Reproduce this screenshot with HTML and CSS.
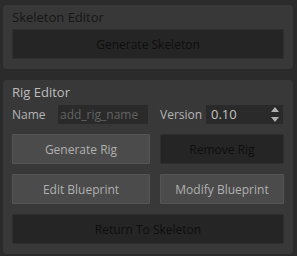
FILE: index.html
```html
<!DOCTYPE html>
<html lang="en">
<head>
    <meta charset="UTF-8">
    <title>Rig Tool</title>
    <link rel="stylesheet" href="styles.css">
</head>
<body>
    <div class="panel disabled">
        <div class="panel-title">Skeleton Editor</div>
        <button class="btn btn-off">Generate Skeleton</button>
    </div>

    <div class="panel">
        <div class="panel-title">Rig Editor</div>
        <div class="field-row">
            <label class="field-label" for="rigName">Name</label>
            <input id="rigName" class="text-input" placeholder="add_rig_name">
            <label class="field-label version-label" for="rigVersion">Version</label>
            <div class="spinbox">
                <span class="spin-value" id="rigVersion">0.10</span>
                <span class="spin-arrows">
                    <span class="arrow-up"></span>
                    <span class="arrow-down"></span>
                </span>
            </div>
        </div>
        <div class="btn-grid">
            <button class="btn">Generate Rig</button>
            <button class="btn btn-off">Remove Rig</button>
            <button class="btn">Edit Blueprint</button>
            <button class="btn">Modify Blueprint</button>
            <button class="btn btn-off wide">Return To Skeleton</button>
        </div>
    </div>
</body>
</html>
```

FILE: styles.css
```css
body {
    margin: 0;
    padding: 5px 4px 0 3px;
    background-color: #2b2b2b;
    font-family: 'Open Sans', 'Noto Sans', sans-serif;
    font-size: 12px;
    color: #b4b4b4;
}

.panel {
    background-color: #383838;
    border-radius: 4px;
    padding: 3px 9px 10px 9px;
    margin-bottom: 11px;
}

.panel-title {
    font-size: 13px;
    line-height: 18px;
    height: 18px;
    margin-bottom: 3px;
    color: #bdbdbd;
}

.disabled .panel-title {
    color: #161616;
}

.btn {
    display: block;
    width: 100%;
    height: 30px;
    padding: 0;
    font-family: inherit;
    font-size: 12px;
    background-color: #4b4b4b;
    color: #b0b0b0;
    border: 1px solid #555555;
    border-radius: 1px;
}

.btn-off {
    background-color: #252525;
    color: #0e0e0e;
    border-color: #2e2e2e;
}

.field-row {
    display: flex;
    align-items: center;
    height: 20px;
    margin-bottom: 10px;
}

.field-label {
    width: 46px;
    color: #b4b4b4;
}

.version-label {
    width: 46px;
    margin-left: 12px;
}

.text-input {
    box-sizing: border-box;
    width: 90px;
    height: 19px;
    border: none;
    background-color: #2a2a2a;
    font-family: inherit;
    font-size: 12px;
    padding: 0 2px;
    color: #b4b4b4;
}

.text-input::placeholder {
    color: #626262;
}

.spinbox {
    display: flex;
    align-items: center;
    justify-content: space-between;
    width: 77px;
    height: 19px;
    background-color: #2a2a2a;
    padding: 0 4px 0 5px;
    box-sizing: border-box;
    font-size: 13px;
    color: #c4c4c4;
}

.spin-arrows {
    display: flex;
    flex-direction: column;
    gap: 5px;
}

.arrow-up, .arrow-down {
    width: 0;
    height: 0;
    border-left: 4px solid transparent;
    border-right: 4px solid transparent;
}

.arrow-up {
    border-bottom: 5px solid #b0b0b0;
}

.arrow-down {
    border-top: 5px solid #b0b0b0;
}

.btn-grid {
    display: grid;
    grid-template-columns: 138px 1fr;
    gap: 10px;
}

.btn-grid .wide {
    grid-column: 1 / span 2;
}
```
